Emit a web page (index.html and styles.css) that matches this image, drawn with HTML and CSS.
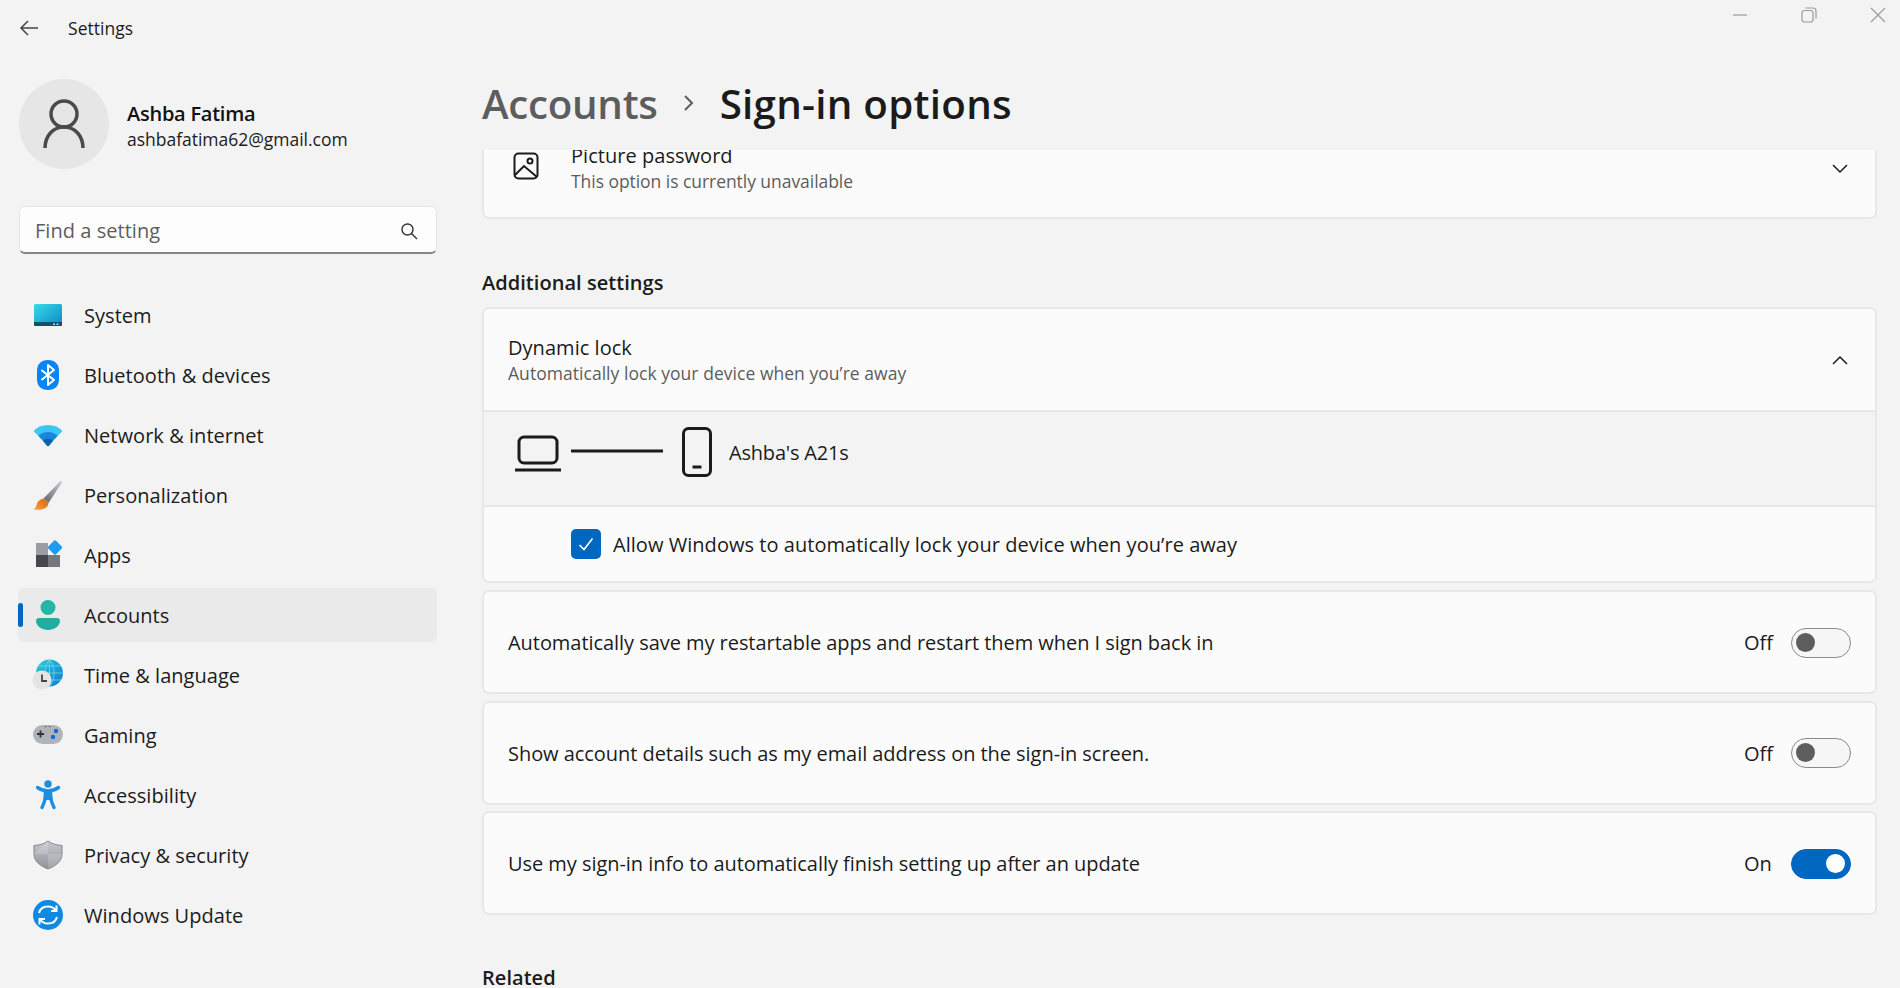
FILE: index.html
```html
<!DOCTYPE html>
<html lang="en">
<head>
  <meta charset="UTF-8" />
  <title>Settings</title>
  <link rel="stylesheet" href="styles.css">
</head>
<body>

  <!-- Window buttons -->
  <div class="window-controls">
    <svg width="16" height="16" viewBox="0 0 16 16"><path d="M1 8h14"/></svg>
    <svg width="16" height="16" viewBox="0 0 16 16"><rect x="1" y="3.500" width="11" height="11.500" rx="2.500"/><path d="M4.500 1h7.500a3 3 0 0 1 3 3v7.500"/></svg>
    <svg width="16" height="16" viewBox="0 0 16 16"><path d="M1 1l14 14M15 1L1 15"/></svg>
  </div>

  <div class="app">

    <!-- Left column -->
    <aside class="sidebar">
      <div class="titlebar">
        <svg class="back-icon" width="20" height="18" viewBox="0 0 20 18"><path d="M19 9H2M9 2L2 9l7 7"/></svg>
        <span>Settings</span>
      </div>

      <div class="profile">
        <div class="avatar">
          <svg width="44" height="50" viewBox="0 0 44 50"><circle cx="22" cy="15" r="13"/><path d="M3 49c0-12 8-21 19-21s19 9 19 21"/></svg>
        </div>
        <div class="profile-text">
          <div class="profile-name">Ashba Fatima</div>
          <div class="profile-mail">ashbafatima62@gmail.com</div>
        </div>
      </div>

      <div class="search">
        <span>Find a setting</span>
        <svg width="18" height="18" viewBox="0 0 18 18"><circle cx="7.500" cy="7.500" r="5.500"/><path d="M11.500 11.500L17 17"/></svg>
      </div>

      <nav class="nav">
        <a class="nav-item">
          <svg width="32" height="32" viewBox="0 0 32 32">
            <defs><linearGradient id="sys" x1="0" y1="0" x2="1" y2="1"><stop offset="0" stop-color="#36dbe6"/><stop offset="1" stop-color="#0f86c9"/></linearGradient></defs>
            <rect x="2" y="5" width="28" height="22" rx="1.500" fill="url(#sys)"/>
            <path d="M2 23h28v2.500a1.500 1.500 0 0 1-1.500 1.500h-25A1.500 1.500 0 0 1 2 25.500z" fill="#0f4f6f"/>
            <rect x="21" y="24.500" width="2" height="1.500" fill="#b9dbe6"/><rect x="24.500" y="24.500" width="2" height="1.500" fill="#b9dbe6"/>
          </svg>
          <span>System</span>
        </a>
        <a class="nav-item">
          <svg width="32" height="32" viewBox="0 0 32 32">
            <path d="M16 1c7 0 11 4 11 11v8c0 7-4 11-11 11S5 27 5 20v-8C5 5 9 1 16 1z" fill="#0a84f5"/>
            <path d="M10 11.500l12 9.500-6 5V6l6 5-12 9.500" fill="none" stroke="#fff" stroke-width="2" stroke-linejoin="round" stroke-linecap="round"/>
          </svg>
          <span>Bluetooth &amp; devices</span>
        </a>
        <a class="nav-item">
          <svg width="32" height="32" viewBox="0 0 32 32">
            <path d="M1.500 12C5 8 10 6 16 6s11 2 14.500 6L16 27z" fill="#3cc6f4"/>
            <path d="M6.500 17C9 14.500 12 13 16 13s7 1.500 9.500 4L16 27z" fill="#1a86d8"/>
            <path d="M11 21.800C12.300 20.500 14 19.500 16 19.500s3.700 1 5 2.300L17 27h-2z" fill="#0f5fb0"/>
          </svg>
          <span>Network &amp; internet</span>
        </a>
        <a class="nav-item">
          <svg width="32" height="32" viewBox="0 0 32 32">
            <defs>
              <linearGradient id="brush" x1="0" y1="1" x2="1" y2="0"><stop offset="0" stop-color="#5f6369"/><stop offset="1" stop-color="#c9ccd1"/></linearGradient>
              <linearGradient id="tip" x1="0" y1="1" x2="1" y2="0"><stop offset="0" stop-color="#f9a23c"/><stop offset="1" stop-color="#d9600f"/></linearGradient>
            </defs>
            <path d="M28 2.500c1-1 2.300 0 1.800 1.200L16.500 24l-5-4.500z" fill="url(#brush)"/>
            <path d="M11.500 19.500l5 4.500c-.5 4-3.500 6-7 6.500-3 .4-6.500 0-8 0 1.500-.8 2.500-2.500 3-4.500.8-3.500 3.500-6 7-6.500z" fill="url(#tip)"/>
          </svg>
          <span>Personalization</span>
        </a>
        <a class="nav-item">
          <svg width="32" height="32" viewBox="0 0 32 32">
            <rect x="4" y="4" width="12" height="12" fill="#9a9ea4"/>
            <rect x="4" y="16" width="12" height="12" fill="#45484c"/>
            <rect x="16" y="16" width="12" height="12" fill="#74777c"/>
            <rect x="17.500" y="3" width="11" height="11" rx="1.500" transform="rotate(45 23 8.500)" fill="#1d9bf0"/>
          </svg>
          <span>Apps</span>
        </a>
        <a class="nav-item is-active">
          <svg width="32" height="32" viewBox="0 0 32 32">
            <circle cx="16" cy="8.500" r="7.500" fill="#25b5a4"/>
            <path d="M7 19h18a3 3 0 0 1 3 3c0 5-6 9-12 9S4 27 4 22a3 3 0 0 1 3-3z" fill="#1fae9f"/>
          </svg>
          <span>Accounts</span>
        </a>
        <a class="nav-item">
          <svg width="32" height="32" viewBox="0 0 32 32">
            <defs><linearGradient id="globe" x1="0" y1="0" x2="1" y2="1"><stop offset="0" stop-color="#2fd0d8"/><stop offset="1" stop-color="#0c78d6"/></linearGradient></defs>
            <circle cx="17.500" cy="14" r="13.500" fill="url(#globe)"/>
            <path d="M4 14h27M17.500 .5v27M17.500 .5c-6 7-6 20 0 27M17.500 .5c6 7 6 20 0 27M6 7h23M6 21h23" fill="none" stroke="#7fe0ea" stroke-width=".7"/>
            <circle cx="10" cy="21" r="9.500" fill="#e4e4e4"/>
            <path d="M10 15.500V22h5" fill="none" stroke="#444" stroke-width="1.800"/>
          </svg>
          <span>Time &amp; language</span>
        </a>
        <a class="nav-item">
          <svg width="32" height="32" viewBox="0 0 32 32">
            <rect x="1" y="6" width="30" height="19" rx="9.500" fill="#b0b4ba"/>
            <path d="M8.500 11.500v7M5 15h7" stroke="#333" stroke-width="1.800"/>
            <circle cx="24" cy="12" r="2.200" fill="#0f6cd0"/><circle cx="21" cy="18" r="2.200" fill="#0f6cd0"/>
            <rect x="13" y="7" width="1.200" height="1.200" fill="#555"/><rect x="17" y="7" width="1.200" height="1.200" fill="#555"/>
          </svg>
          <span>Gaming</span>
        </a>
        <a class="nav-item">
          <svg width="32" height="32" viewBox="0 0 32 32">
            <circle cx="16" cy="5" r="3.700" fill="#1a8ee0"/>
            <path d="M5.500 8.500C9 11 12.500 12 16 12s7-1 10.500-3.500M13.500 12.500c.5 5.500-1 11-3.500 16M18.500 12.500c-.5 5.500 1 11 3.500 16" fill="none" stroke="#1a8ee0" stroke-width="3.400" stroke-linecap="round"/>
            <path d="M12 12h8l.5 9h-9z" fill="#1a8ee0"/>
          </svg>
          <span>Accessibility</span>
        </a>
        <a class="nav-item">
          <svg width="32" height="32" viewBox="0 0 32 32">
            <defs><linearGradient id="shield" x1="0" y1="0" x2="0" y2="1"><stop offset="0" stop-color="#c6c9ce"/><stop offset="1" stop-color="#8f9399"/></linearGradient></defs>
            <path d="M16 2c4 3 8 4 14 4.500V15c0 7-6 12-14 15C8 27 2 22 2 15V6.500C8 6 12 5 16 2z" fill="url(#shield)" stroke="#85898f"/>
            <path d="M16 2v28C24 27 30 22 30 15H2" fill="#fff" fill-opacity=".16"/>
          </svg>
          <span>Privacy &amp; security</span>
        </a>
        <a class="nav-item">
          <svg width="32" height="32" viewBox="0 0 32 32">
            <circle cx="16" cy="16" r="15" fill="#0f8ae0"/>
            <path d="M7 14c1-4 4.500-6.500 9-6.500 3 0 5.500 1 7.500 3.500M24.500 6.500V12H19M25 18c-1 4-4.500 6.500-9 6.500-3 0-5.500-1-7.500-3.500M7.500 25.500V20H13" fill="none" stroke="#fff" stroke-width="2"/>
          </svg>
          <span>Windows Update</span>
        </a>
      </nav>
    </aside>

    <!-- Right column -->
    <main class="main">
      <header class="page-title">
        <span class="crumb">Accounts</span>
        <svg class="crumb-sep" width="12" height="18" viewBox="0 0 12 18"><path d="M2 2l7 7-7 7"/></svg>
        <span class="page-name">Sign-in options</span>
      </header>

      <div class="scroller">
        <div class="card picture-card">
          <svg class="picture-icon" width="26" height="28" viewBox="0 0 26 28"><rect x="1.500" y="1.500" width="23" height="25" rx="4"/><circle cx="17" cy="9" r="2.500"/><path d="M2 23l9-9 13 11"/></svg>
          <div class="row-text">
            <div class="row-title">Picture password</div>
            <div class="row-sub">This option is currently unavailable</div>
          </div>
          <svg class="chevron" width="18" height="12" viewBox="0 0 18 12"><path d="M2 2l7 7 7-7"/></svg>
        </div>

        <h3 class="section-title">Additional settings</h3>

        <div class="card lock-card">
          <div class="lock-header">
            <div class="row-text">
              <div class="row-title">Dynamic lock</div>
              <div class="row-sub">Automatically lock your device when you’re away</div>
            </div>
            <svg class="chevron" width="18" height="12" viewBox="0 0 18 12"><path d="M2 10l7-7 7 7"/></svg>
          </div>
          <div class="device-row">
            <svg class="device-icons" width="197" height="50" viewBox="0 0 197 50">
              <rect x="4" y="10" width="38" height="26" rx="5"/>
              <path d="M0 43h46M56 24h92"/>
              <rect x="168.500" y="1.500" width="27" height="47" rx="5"/>
              <path d="M177.500 40h9"/>
            </svg>
            <span>Ashba's A21s</span>
          </div>
          <div class="check-row">
            <span class="checkbox">
              <svg width="16" height="14" viewBox="0 0 16 14"><path d="M1.500 8l4.500 4.500 8.500-11"/></svg>
            </span>
            <span>Allow Windows to automatically lock your device when you’re away</span>
          </div>
        </div>

        <div class="card toggle-card">
          <span class="toggle-label">Automatically save my restartable apps and restart them when I sign back in</span>
          <span class="toggle-state">Off</span>
          <span class="toggle"></span>
        </div>

        <div class="card toggle-card">
          <span class="toggle-label">Show account details such as my email address on the sign-in screen.</span>
          <span class="toggle-state">Off</span>
          <span class="toggle"></span>
        </div>

        <div class="card toggle-card">
          <span class="toggle-label">Use my sign-in info to automatically finish setting up after an update</span>
          <span class="toggle-state">On</span>
          <span class="toggle is-on"></span>
        </div>

        <h3 class="section-title related">Related</h3>
      </div>
    </main>
  </div>

</body>
</html>
```

FILE: styles.css
```css
* {
  box-sizing: border-box;
}

body {
  margin: 0;
  background: #f3f3f3;
  color: #1b1b1b;
  font-family: "Open Sans", "Noto Sans", sans-serif;
  font-size: 20px;
  letter-spacing: 0.04px;
  overflow: hidden;
}

svg {
  flex-shrink: 0;
  display: block;
}

.app {
  display: flex;
  height: 988px;
  overflow: hidden;
}

.window-controls {
  position: absolute;
  top: 7px;
  right: 14px;
  display: flex;
  gap: 53px;
}

.window-controls svg {
  fill: none;
  stroke: #9b9b9b;
  stroke-width: 1.2;
}

/* Sidebar */
.sidebar {
  width: 482px;
  flex-shrink: 0;
  padding-left: 18px;
}

.titlebar {
  display: flex;
  align-items: center;
  height: 56px;
  font-size: 17.500px;
}

.back-icon {
  fill: none;
  stroke: #444;
  stroke-width: 1.500;
  margin: 0 29px 0 1px;
}

.profile {
  display: flex;
  align-items: center;
  gap: 18px;
  margin: 23px 0 0 1px;
}

.avatar {
  width: 90px;
  height: 90px;
  border-radius: 50%;
  background: #e6e6e6;
  display: flex;
  align-items: center;
  justify-content: center;
}

.avatar svg {
  fill: none;
  stroke: #4a4a4a;
  stroke-width: 3.500;
}

.profile-text {
  padding-top: 4px;
}

.profile-name {
  font-size: 20px;
  font-weight: 600;
  letter-spacing: -0.25px;
  color: #111;
  line-height: 26px;
}

.profile-mail {
  font-size: 17.500px;
  letter-spacing: -0.02px;
  line-height: 24px;
}

.search {
  display: flex;
  align-items: center;
  justify-content: space-between;
  width: 418px;
  height: 48px;
  margin: 37px 0 0 1px;
  padding: 2px 18px 0 15px;
  background: #fdfdfd;
  border: 1px solid #e6e6e6;
  border-bottom: 2px solid #868686;
  border-radius: 6px;
  color: #5d5d5d;
}

.search svg {
  fill: none;
  stroke: #333;
  stroke-width: 1.400;
}

.nav {
  display: flex;
  flex-direction: column;
  gap: 6px;
  width: 419px;
  margin-top: 34px;
}

.nav-item {
  position: relative;
  display: flex;
  align-items: center;
  gap: 20px;
  height: 54px;
  padding-left: 14px;
  border-radius: 6px;
}

.nav-item.is-active {
  background: #eaeaea;
}

.nav-item.is-active::before {
  content: "";
  position: absolute;
  left: 0;
  top: 15px;
  width: 5px;
  height: 24px;
  border-radius: 3px;
  background: #0067c0;
}

/* Main column */
.main {
  flex: 1;
  display: flex;
  flex-direction: column;
  min-width: 0;
  padding-right: 23px;
}

.page-title {
  display: flex;
  align-items: center;
  height: 150px;
  padding-top: 56px;
  font-size: 40.300px;
  font-weight: 600;
  flex-shrink: 0;
}

.crumb {
  color: #5d5d5d;
  letter-spacing: -0.3px;
}

.page-name {
  letter-spacing: 0.27px;
}

.crumb-sep {
  margin: 0 25px;
  fill: none;
  stroke: #5d5d5d;
  stroke-width: 2;
}

.scroller {
  flex: 1;
  overflow: hidden;
}

.card {
  background: #fbfbfb;
  border: 2px solid #e8e8e8;
  border-radius: 7px;
}

.row-title {
  line-height: 26px;
}

.row-sub {
  font-size: 17.500px;
  line-height: 24px;
  color: #5d5d5d;
}

.chevron {
  fill: none;
  stroke: #1b1b1b;
  stroke-width: 1.500;
}

.picture-card {
  display: flex;
  align-items: flex-start;
  height: 89px;
  margin-top: -20px;
  padding: 11px 26px 0 29px;
}

.picture-card .row-sub {
  letter-spacing: -0.05px;
}

.picture-icon {
  fill: none;
  stroke: #1b1b1b;
  stroke-width: 2;
  margin: 9px 32px 0 0;
}

.picture-card .chevron {
  margin: 20px 0 0 auto;
}

.section-title {
  margin: 51px 0 11px;
  font-size: 20px;
  font-weight: 600;
  line-height: 26px;
}

.section-title.related {
  margin: 50px 0 0;
}

.lock-card {
  margin-bottom: 7px;
}

.lock-header {
  display: flex;
  align-items: center;
  justify-content: space-between;
  height: 101px;
  padding: 0 26px 0 24px;
}

.device-row {
  display: flex;
  align-items: flex-start;
  gap: 17px;
  height: 97px;
  padding: 15px 0 0 31px;
  background: #f3f3f3;
  border-top: 2px solid #e8e8e8;
  border-bottom: 2px solid #e8e8e8;
}

.device-row span {
  margin-top: 12px;
  letter-spacing: -0.2px;
}

.device-icons {
  fill: none;
  stroke: #1b1b1b;
  stroke-width: 3;
}

.check-row {
  display: flex;
  align-items: center;
  gap: 12px;
  height: 74px;
  padding-left: 87px;
}

.checkbox {
  display: flex;
  align-items: center;
  justify-content: center;
  width: 30px;
  height: 30px;
  border-radius: 5px;
  background: #0067c0;
}

.checkbox svg {
  fill: none;
  stroke: #fff;
  stroke-width: 1.600;
}

.toggle-card {
  display: flex;
  align-items: center;
  height: 104px;
  margin-bottom: 6.500px;
  padding: 1px 24px 0;
}

.toggle-label {
  letter-spacing: -0.05px;
}

.toggle-state {
  margin-left: auto;
  width: 47px;
}

.toggle {
  position: relative;
  width: 60px;
  height: 30px;
  border: 1.500px solid #8a8a8a;
  border-radius: 15px;
  background: #f6f6f6;
}

.toggle::after {
  content: "";
  position: absolute;
  left: 4px;
  top: 4px;
  width: 19px;
  height: 19px;
  border-radius: 50%;
  background: #5d5d5d;
}

.toggle.is-on {
  background: #0067c0;
  border-color: #0067c0;
}

.toggle.is-on::after {
  left: auto;
  right: 5px;
  background: #fff;
}
```
